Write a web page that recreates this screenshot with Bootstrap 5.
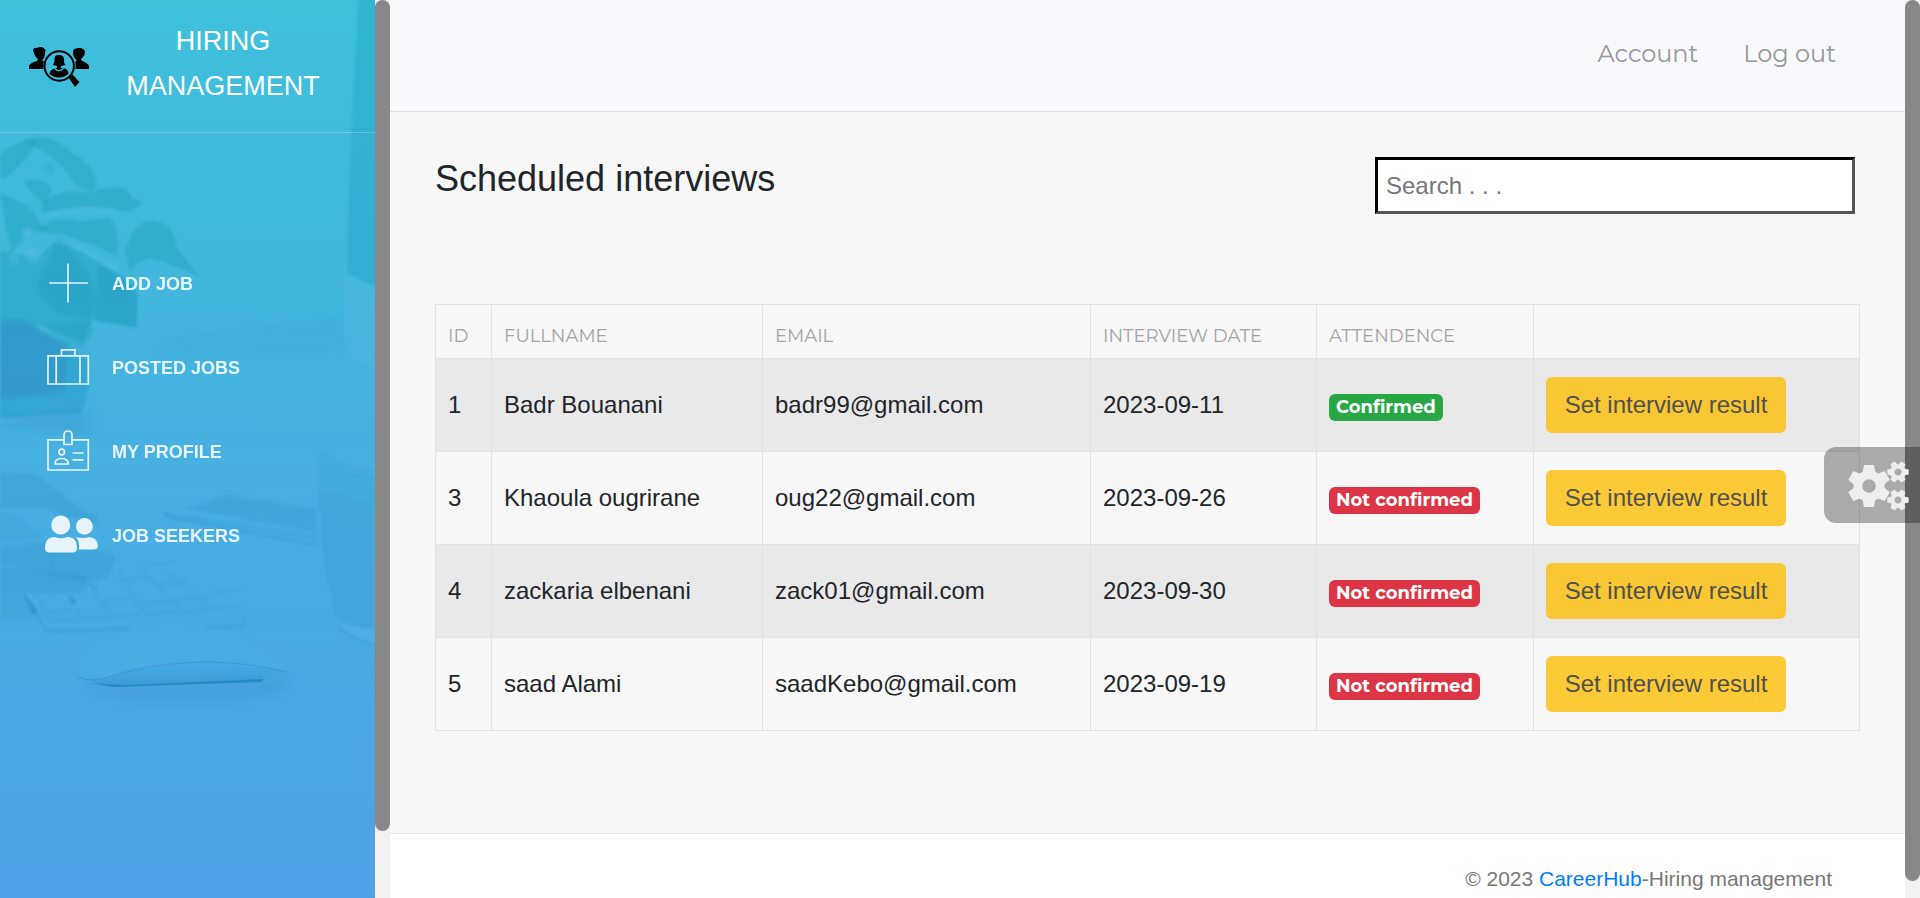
<!DOCTYPE html>
<html lang="en">
<head>
<meta charset="utf-8">
<title>Hiring Management</title>
<link href="https://cdn.jsdelivr.net/npm/bootstrap@5.3.0/dist/css/bootstrap.min.css" rel="stylesheet">
<style>
body{font-family:"Liberation Sans",Arial,sans-serif;font-size:24px;line-height:1.5;color:#212529;background:#f7f7f8;height:898px;overflow:hidden}
.side{width:375px;background:linear-gradient(180deg,#3fc1dc 0,#40bbdc 15%,#43b5de 36%,#49ade3 62%,#4fa2e6 100%)}
.side-art{left:0;top:0}
.side-brand{height:133px;border-bottom:1px solid rgba(255,255,255,.25);padding:19px 0 0 29px}
.side-brand svg{margin-top:25px}
.brand-name{width:266px;font-size:27px;line-height:45px;color:#fff;margin-left:-1px}
.side-menu{padding:109px 0 0 43px}
.side-menu .nav-link{height:84px;padding:0;color:#fff;opacity:.87;font-weight:700;font-size:18px}
.side-menu svg{width:69px;height:60px;flex:none;margin-top:-2px}
.sbar{width:15px;background:#f1f1f1}
.sbar-thumb{background:#888;border-radius:8px;width:15px}
.topbar{height:112px;background:#f8f9fc;border-bottom:1px solid #dee0e3;padding:0 69px 3px 0;gap:45px}
.topbar a,.list-table th,.state{font-family:Montserrat,Inter,"Open Sans",sans-serif}
.topbar a{color:#979797;font-size:24px;font-weight:400;text-decoration:none;white-space:nowrap}
.content-area{height:721px;padding:45px 45px 0}
.content-area h1{font-size:36px;line-height:43px;margin:0}
.search-box{width:480px;height:57px;border:3px inset #555;border-color:#000 #555 #555 #000;padding:0 8px;outline:0;background:#fff;margin-right:5px}
.search-box::placeholder{color:#777;opacity:1}
.list-table{width:1425px;table-layout:fixed;margin:90px 0 0;--bs-table-bg:transparent;--bs-table-striped-bg:#e9e9e9;border-color:#dee2e6;color:#212529;border-collapse:collapse}
.list-table>:not(caption)>*>*{padding:0 12px;vertical-align:middle;border-width:1px}
.list-table thead tr{height:54px}.list-table tbody tr{height:93px}
.list-table thead th{color:#a3a3a3;font-weight:400;font-size:18px;padding-top:9px!important;white-space:nowrap}
.btn-result{font-size:24px;width:240px;height:56px;padding:0;background:#fcc937;color:#505050;border:0;border-radius:6px}
tr:nth-child(odd) .btn-result{background:#f9c733}
.state{font-size:18px;line-height:27px;height:27px;padding:0 7px;border-radius:6px;font-weight:700;vertical-align:middle;margin-top:1px}
.bg-yes{background:#28a745}.bg-no{background:#dc3545}
.foot{height:65px;background:#fff;border-top:1px solid #e5e5e5;color:#777;font-size:21px;padding:29px 73px 0 0}
.foot a{color:#007bff;text-decoration:none}
.gear-tab{right:0;top:447px;width:96px;height:76px;background:rgba(0,0,0,.31);border-radius:12px 0 0 12px}
</style>
</head>
<body class="d-flex">
<aside class="side position-relative flex-shrink-0">
<svg class="side-art position-absolute" width="375" height="898" viewBox="0 0 375 898">
<defs><filter id="s1"><feGaussianBlur stdDeviation="1.5"/></filter><filter id="s3"><feGaussianBlur stdDeviation="5"/></filter>
<linearGradient id="md" x2="0" y2="1"><stop offset="0" stop-color="#1c84b8" stop-opacity="0"/><stop offset="1" stop-color="#1c84b8" stop-opacity=".35"/></linearGradient></defs>
<g filter="url(#s1)">
<path d="M359-5H380V288L347 273Q350 130 359-5Z" fill="#108eba" fill-opacity=".24"/>
<path d="M343 290Q344 280 348 275L376 289V368Q343 360 343 340Z" fill="#5fc2ec" fill-opacity=".14"/>
<g fill="#0a8aa0" fill-opacity=".25">
<path d="M0 155Q15 139 38 141 24 164 4 179L0 175Z"/>
<path d="M22 140Q50 130 72 153 98 167 96 188 84 195 72 180 60 158 22 140Z"/>
<path d="M40 205Q58 188 82 192L110 188Q128 185 132 198L143 202 130 212Q90 203 44 213Z"/>
<path d="M24 182Q40 176 51 188L47 205Q36 200 24 182Z"/>
<path d="M0 194Q19 198 34 212L42 226 58 234 35 232Q22 228 24 240 10 250 12 260 0 256Z"/>
<path d="M38 228Q55 215 82 222L110 217Q121 234 118 258L100 248 62 234Z"/>
<path d="M125 252Q133 220 153 221 175 224 177 248L200 277Q172 264 152 258 137 260 130 272Z"/>
<path d="M0 250 36 258 60 238 97 262 128 280 137 292V328L92 320 83 344Q60 333 40 325L0 322Z"/>
<path d="M44 163Q55 158 55 172 50 178 43 170Z" fill-opacity=".12"/>
</g>
<path d="M42 324 92 321 94 332 84 348Q60 345 42 324Z" fill="#0a8aa0" fill-opacity=".15"/>
<g fill="#127fae" fill-opacity=".14">
<path d="M58 240Q90 262 96 300L90 318Q50 320 36 285Z"/><path d="M98 263Q130 280 137 292V328L95 320Z"/>
<path d="M0 320Q28 316 42 330L68 343 88 360Q92 395 80 414L0 418Z" fill-opacity=".25"/>
</g>
<path d="M0 324Q30 318 40 332L66 345V392L0 400Z" fill="#1679b2" fill-opacity=".25"/>
<g stroke="#6bcbea" stroke-opacity=".22" fill="none" stroke-width="3"><path d="M45 216Q80 206 115 212M58 242Q84 246 118 270M10 258Q24 244 35 256"/></g>
<g fill="#55c4e6" fill-opacity=".35"><circle cx="27" cy="233" r="5"/><circle cx="33" cy="255" r="8"/><circle cx="14" cy="260" r="4"/></g>
<g fill="#2287bd" fill-opacity=".25">
<path d="M0 473 35 474Q60 492 84 512L98 514Q99 522 95 524L70 517 45 509 20 506 0 508Z"/>
<path d="M0 510Q25 520 45 537L0 541Z" fill-opacity=".14"/>
<path d="M0 546 55 542Q85 549 113 553 117 563 111 567L112 573Q100 582 82 581L52 576 28 566 0 565Z"/>
<path d="M0 567 27 566Q65 577 83 575 94 583 82 592 60 594 41 593L0 595Z"/>
<path d="M0 595 24 595 38 617 0 618Z" fill-opacity=".2"/>
<path d="M185 509 227 495 316 509V532Z" fill-opacity=".23"/><path d="M163 511 318 535V541L167 517Z" fill-opacity=".12"/>
<path d="M319 488Q348 500 375 503V631L338 622Q319 560 319 488Z" fill-opacity=".22"/>
<path d="M318 454Q335 470 375 476V502Q340 500 319 488Z" fill-opacity=".08"/>
<path d="M24 593 38 611 33 615Z M68 593 78 603 71 604Z M88 582 95 586 96 592Z" fill-opacity=".5"/>
</g>
<g fill="none" stroke="#2389bf" stroke-opacity=".4" stroke-width="2">
<path d="M164 514 172 518 317 545"/><path d="M24 594 46 629 50 631 130 629M205 628 245 626"/>
</g>
<g fill="none" stroke="#2389bf" stroke-opacity=".22" stroke-width="1.5">
<path d="M38 595 48 621 78 620M70 596 82 619 111 617M92 590 113 616 144 615M118 570 146 614 177 612M140 566 182 612 209 610M166 572 211 608 242 607M44 612 72 610M102 601 132 598M132 604 168 602M120 580 152 577M155 586 187 581M175 600 209 596M214 592 241 589M149 565 176 562M245 610V625M318 449Q340 470 375 472M324 486Q340 470 375 478"/>
<path d="M60 541Q53 550 50 570M339 627Q353 640 375 645" stroke-width="2.4"/>
</g>
<path d="M340 622 375 630V642Q350 640 340 622Z" fill="#63c0ec" fill-opacity=".2"/>
<path d="M119 632Q170 621 230 631 265 645 287 672 240 660 205 661 140 663 102 678 76 682 74 664 84 640 119 632Z" fill="#4bade4" fill-opacity=".5"/>
<path d="M102 679Q150 663 205 661 246 662 287 672L263 680 114 686 91 682Z" fill="url(#md)"/>
</g>
<path d="M78 677Q92 682 102 679 150 663 205 662 246 662 287 672" fill="none" stroke="#2a87c0" stroke-opacity=".45" stroke-width="1.200"/>
<path d="M90 683Q110 685 130 685L263 679 262 682 114 687Z" fill="#1c7bb9" fill-opacity=".65"/>
<g filter="url(#s3)"><path d="M83 678 105 687 265 680 292 674Q293 692 262 699 175 708 106 699 86 693 83 678Z" fill="#247fb9" fill-opacity=".2"/>
<path d="M0 418 90 410 88 436 0 425Z" fill="#247fb9" fill-opacity=".2"/><path d="M180 335 345 315 346 350 150 355Z" fill="#247fb9" fill-opacity=".05"/></g>
</svg>
<div class="position-relative">
<div class="side-brand d-flex">
<svg class="flex-shrink-0" width="62" height="44" viewBox="0 0 62 44">
<path d="M0 25V22Q1 19 8 17L9 15Q5 12 5 7 5 3 9 4L12 3Q16 4 16 8 16 14 13 16.500L17 18.500 15 21V25Z"/>
<path d="M5 9Q2 4 8 4 14 1 16 6L17 5 15 11H6ZM45 9Q43 4 48 5 54 3 56 7L55 12H45Z"/>
<path d="M60 25V22Q59 19 53 17L52 15Q56 12 55 8 54 4 50 4 45 4 44 8 44 14 48 16.500L44 18.500 46 21V25Z"/>
<circle cx="30.500" cy="22" r="16.200" fill="#3fbcdb"/>
<circle cx="30.200" cy="22" r="14.700" fill="none" stroke="#000" stroke-width="2"/>
<path d="M24 21Q26 18 25.500 14 26 10.500 30 11 35 11 35 15 34.500 19 36.500 21L32 22V24L36 24.500Q39.500 26 39.500 30 35 33.500 30 33.500 25 33.500 20.500 30 21 25 26 24.500L28 24V22Z"/>
<path d="M25.500 24.500Q30 29 34.500 24.500" fill="none" stroke="#3fbcdb" stroke-width="1.200"/>
<path d="M39.500 33.500 43 30 50.500 38 46 43Z"/>
</svg>
<div class="brand-name text-center flex-shrink-0">HIRING<br>MANAGEMENT</div>
</div>
<nav class="side-menu nav flex-column">
<a class="nav-link d-flex align-items-center" href="#"><svg viewBox="0 0 69 60" stroke="#fff" stroke-width="1.700" fill="none"><path d="M25 10.500V49.500M6 30H45"/></svg>ADD JOB</a>
<a class="nav-link d-flex align-items-center" href="#"><svg viewBox="0 0 69 60" stroke="#fff" stroke-width="1.700" fill="none"><path d="M5 18.800H45.300V47H5ZM13.200 19V47M37 19V47M18.500 18.500V12.800H32V18.500"/></svg>POSTED JOBS</a>
<a class="nav-link d-flex align-items-center" href="#"><svg viewBox="0 0 69 60" stroke="#fff" stroke-width="1.700" fill="none"><path d="M21 18.800H5V49H45.300V18.800H29M21 23.500V14Q21 10 25 10T29 14V23.500ZM29.500 32H40.500M29.500 38.800H40.500M12 43Q12 37.500 18.500 37.500T25.500 43Z"/><circle cx="18.700" cy="31" r="2.800"/></svg>MY PROFILE</a>
<a class="nav-link d-flex align-items-center" href="#"><svg viewBox="0 0 69 60" fill="#fff"><circle cx="17.700" cy="20" r="9.500"/><circle cx="41.400" cy="21.400" r="8.400"/><path d="M2 43Q2 32 12 32 18 34.500 24 32 34 32 34 43 34 47.500 29.500 47.500H6.500Q2 47.500 2 43ZM33 32Q41 34 46 32 55 33 55 41 54.500 44.500 50 44.500H35.800Q37 36 33 32Z"/></svg>JOB SEEKERS</a>
</nav>
</div>
</aside>
<div class="sbar flex-shrink-0"><div class="sbar-thumb" style="height:831px"></div></div>
<main class="flex-grow-1">
<header class="topbar d-flex align-items-center justify-content-end"><a href="#">Account</a><a href="#">Log out</a></header>
<section class="content-area">
<div class="d-flex justify-content-between"><h1 class="fw-normal">Scheduled interviews</h1><input class="search-box" type="text" placeholder="Search . . ."></div>
<table class="table table-bordered table-striped list-table">
<colgroup><col style="width:56px"><col style="width:271px"><col style="width:328px"><col style="width:226px"><col style="width:217px"><col style="width:326px"></colgroup>
<thead><tr><th>ID</th><th>FULLNAME</th><th>EMAIL</th><th>INTERVIEW DATE</th><th>ATTENDENCE</th><th></th></tr></thead>
<tbody>
<tr><td>1</td><td>Badr Bouanani</td><td>badr99@gmail.com</td><td>2023-09-11</td><td><span class="badge state bg-yes">Confirmed</span></td><td><button class="btn btn-result">Set interview result</button></td></tr>
<tr><td>3</td><td>Khaoula ougrirane</td><td>oug22@gmail.com</td><td>2023-09-26</td><td><span class="badge state bg-no">Not confirmed</span></td><td><button class="btn btn-result">Set interview result</button></td></tr>
<tr><td>4</td><td>zackaria elbenani</td><td>zack01@gmail.com</td><td>2023-09-30</td><td><span class="badge state bg-no">Not confirmed</span></td><td><button class="btn btn-result">Set interview result</button></td></tr>
<tr><td>5</td><td>saad Alami</td><td>saadKebo@gmail.com</td><td>2023-09-19</td><td><span class="badge state bg-no">Not confirmed</span></td><td><button class="btn btn-result">Set interview result</button></td></tr>
</tbody>
</table>
</section>
<footer class="foot text-end">© 2023 <a href="#">CareerHub</a>-Hiring management</footer>
</main>
<div class="sbar flex-shrink-0"><div class="sbar-thumb" style="height:881px"></div></div>
<div class="gear-tab position-fixed">
<svg class="d-block" width="96" height="76" viewBox="0 0 96 76" fill="#eee" stroke="#eee">
<defs><g id="cog"><circle r="11.500" fill="none" stroke-width="9"/><path d="M-4.500-21H4.500L6-13H-6ZM-4.500 21H4.500L6 13H-6Z" stroke-width="1.500" stroke-linejoin="round"/><path d="M-4.500-21H4.500L6-13H-6ZM-4.500 21H4.500L6 13H-6Z" transform="rotate(60)" stroke-width="1.500" stroke-linejoin="round"/><path d="M-4.500-21H4.500L6-13H-6ZM-4.500 21H4.500L6 13H-6Z" transform="rotate(120)" stroke-width="1.500" stroke-linejoin="round"/></g></defs>
<use href="#cog" transform="translate(45 39) scale(.97)"/>
<use href="#cog" transform="translate(74 25) rotate(30) scale(.49)"/>
<use href="#cog" transform="translate(74 53) rotate(30) scale(.49)"/>
</svg>
</div>
<script src="https://cdn.jsdelivr.net/npm/bootstrap@5.3.0/dist/js/bootstrap.bundle.min.js"></script>
</body>
</html>
